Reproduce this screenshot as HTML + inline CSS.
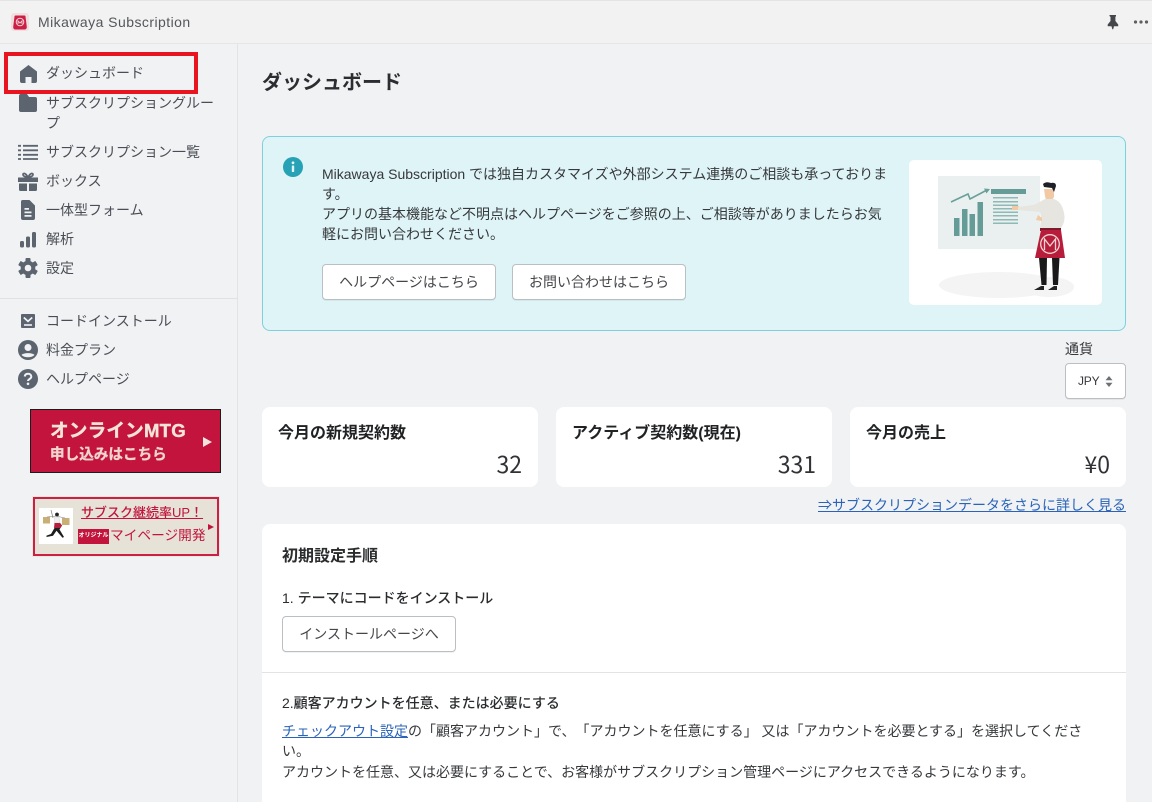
<!DOCTYPE html>
<html lang="ja"><head><meta charset="utf-8"><style>
*{box-sizing:border-box}
html,body{margin:0;padding:0;width:1152px;height:802px;overflow:hidden}
body{position:relative;background:#f1f2f4;color:#36383b;font-family:"Liberation Sans","Noto Sans CJK JP",sans-serif;font-size:14px;text-spacing-trim:space-all}
.a{position:absolute;white-space:nowrap}
.t{line-height:20px;font-weight:400}
.n{color:#4a4e54;left:46px}
.btn{position:absolute;background:#fff;border:1px solid #babfc3;border-radius:4px;box-shadow:0 1px 0 rgba(0,0,0,.05);text-align:center;font-weight:400;color:#44464a;line-height:34px;height:36px;white-space:nowrap}
.card{position:absolute;background:#fff;border-radius:8px;top:407px;height:80px;width:276px}
.card .h{position:absolute;left:16px;top:17px;font-weight:700;font-size:16px;line-height:20px;white-space:nowrap;color:#202223}
.card .v{position:absolute;right:16px;top:41px;font-size:23px;line-height:30px;color:#303236;font-family:"Noto Sans CJK JP","Liberation Sans",sans-serif;font-weight:400}
svg{position:absolute;display:block}
a{color:#2a63b8;text-decoration:underline}
</style></head><body>

<div class="a" style="left:0;top:0;width:1152px;height:44px;background:#f2f2f2;border-bottom:1px solid #e6e6e6;border-top:1px solid #e4e4e4"></div>
<svg style="left:11px;top:13px" width="18" height="18" viewBox="0 0 18 18"><rect width="18" height="18" rx="3" fill="#f0dfe0"/><path d="M3.500 3.500q0-1 1-1h9q1 0 1 1l1.300 10.500q0 2.500-2.300 2.500h-9q-2.300 0-2.300-2.500z" fill="#cc1f45"/><circle cx="9" cy="9" r="3.800" fill="none" stroke="#f7d5da" stroke-width="1"/><path d="M7 11V8l2 2 2-2v3" fill="none" stroke="#f7d5da" stroke-width=".9"/></svg>
<div class="a" style="left:38px;top:12px;line-height:20px;font-size:14px;color:#53565a;letter-spacing:.45px">Mikawaya Subscription</div>
<svg style="left:1106px;top:14px" width="14" height="16" viewBox="0 0 14 16"><path d="M3.500 1h6.500v1l-.6 1v4l2.800 3.500v1.700H8l-.8 3h-.9l-.8-3H1.700v-1.700L4.500 7V3L3.500 2z" fill="#44474a"/></svg>
<svg style="left:1133px;top:19px" width="16" height="6" viewBox="0 0 16 6"><circle cx="2.500" cy="3" r="1.600" fill="#5c5f62"/><circle cx="8" cy="3" r="1.600" fill="#5c5f62"/><circle cx="13.500" cy="3" r="1.600" fill="#5c5f62"/></svg>

<div class="a" style="left:237px;top:44px;width:1px;height:758px;background:#e1e3e5"></div>
<div class="a" style="left:0;top:298px;width:238px;height:1px;background:#dfe1e4"></div>

<div class="a" style="left:4px;top:52px;width:194px;height:42px;border:4px solid #e8141f"></div>

<svg style="left:18px;top:63px" width="20" height="20" viewBox="0 0 20 20"><path d="M10.500 2L19 8.500V18q0 2-2 2h-3.500v-6h-6v6H4q-2 0-2-2V8.500z" fill="#5c6470"/></svg>
<div class="a t n" style="top:63px">ダッシュボード</div>
<svg style="left:18px;top:93px" width="20" height="20" viewBox="0 0 20 20"><path d="M1 3q0-2 2-2h6l2 3h6q2 0 2 2v11q0 2-2 2H3q-2 0-2-2z" fill="#5c6470"/></svg>
<div class="a t n" style="top:93px">サブスクリプショングルー</div>
<div class="a t n" style="top:113px">プ</div>
<svg style="left:18px;top:143px" width="20" height="18" viewBox="0 0 20 18"><path d="M0 2.800h3M0 7.300h3M0 11.800h3M0 16h3M5 2.800h15M5 7.300h15M5 11.800h15M5 16h15" stroke="#5c6470" stroke-width="1.800" fill="none"/></svg>
<div class="a t n" style="top:142px">サブスクリプション一覧</div>
<svg style="left:18px;top:172px" width="20" height="20" viewBox="0 0 20 20"><path d="M0 5.500h20V10H0zM1 11.500h8V19H2.500Q1 19 1 17.500zM11 11.500h8v6q0 1.500-1.500 1.500H11z" fill="#5c6470"/><path d="M9.700 5C7 5 5 4 5 2.500S7.500.5 9.700 5zm.6 0C13 5 15 4 15 2.500S12.500.5 10.300 5z" fill="none" stroke="#5c6470" stroke-width="1.700"/></svg>
<div class="a t n" style="top:171px">ボックス</div>
<svg style="left:18px;top:200px" width="20" height="20" viewBox="0 0 20 20"><path fill-rule="evenodd" d="M4.500 0h7L17 5.500V18q0 2-2 2H5q-2 0-2-2V2q0-2 1.500-2zM6.500 8v1.800h4.500V8zM6.500 11.500v1.800h7v-1.800zM6.500 15v1.800h7V15z" fill="#5c6470"/></svg>
<div class="a t n" style="top:200px">一体型フォーム</div>
<svg style="left:18px;top:229px" width="20" height="20" viewBox="0 0 20 20"><rect x="2" y="12" width="4" height="6.500" rx="1.500" fill="#5c6470"/><rect x="8" y="7.500" width="4" height="11" rx="1.500" fill="#5c6470"/><rect x="14" y="3" width="4" height="15.500" rx="1.500" fill="#5c6470"/></svg>
<div class="a t n" style="top:229px">解析</div>
<svg style="left:18px;top:258px" width="20" height="20" viewBox="0 0 20 20"><g fill="#5c6470"><circle cx="10" cy="10" r="7.300"/><rect x="7.500" y="0" width="5" height="20" rx="1"/><rect x="7.500" y="0" width="5" height="20" rx="1" transform="rotate(60 10 10)"/><rect x="7.500" y="0" width="5" height="20" rx="1" transform="rotate(120 10 10)"/></g><circle cx="10" cy="10" r="3.300" fill="#f1f2f4"/></svg>
<div class="a t n" style="top:258px">設定</div>

<svg style="left:18px;top:311px" width="20" height="20" viewBox="0 0 20 20"><rect x="3" y="3" width="14" height="14" rx="1" fill="#5c6470"/><path d="M5.800 6.500L10 10.300l4.200-3.800" fill="none" stroke="#f1f2f4" stroke-width="1.700"/><path d="M6 14h8" stroke="#f1f2f4" stroke-width="1.600"/></svg>
<div class="a t n" style="top:311px">コードインストール</div>
<svg style="left:18px;top:340px" width="20" height="20" viewBox="0 0 20 20"><circle cx="10" cy="10" r="10" fill="#5c6470"/><circle cx="10" cy="7.500" r="3.500" fill="#f1f2f4"/><path d="M3.500 15c2-2.500 11-2.500 13 0-3 3-10 3-13 0z" fill="#f1f2f4"/></svg>
<div class="a t n" style="top:340px">料金プラン</div>
<svg style="left:18px;top:369px" width="20" height="20" viewBox="0 0 20 20"><circle cx="10" cy="10" r="10" fill="#5c6470"/><path d="M6.800 7.500C7 5.500 8.500 4.800 10 4.800c2 0 3.300 1.200 3.300 2.800 0 2.400-3.300 2.400-3.300 4.400" fill="none" stroke="#f1f2f4" stroke-width="2"/><circle cx="10" cy="14.800" r="1.300" fill="#f1f2f4"/></svg>
<div class="a t n" style="top:369px">ヘルプページ</div>

<div class="a" style="left:30px;top:409px;width:191px;height:64px;background:#c2143c;border:1px solid #1c1c1c"></div>
<div class="a" style="left:50px;top:419px;font-size:18.600px;line-height:24px;font-weight:700;color:#f4e3d8;-webkit-text-stroke:.4px #f4e3d8;letter-spacing:.2px">オンラインMTG</div>
<div class="a" style="left:50px;top:445px;font-size:14.600px;line-height:20px;font-weight:700;color:#f0d5cf;-webkit-text-stroke:.3px #f0d5cf">申し込みはこちら</div>
<svg style="left:203px;top:437px" width="9" height="10" viewBox="0 0 9 10"><path d="M0 0l9 5-9 5z" fill="#f1e5dd"/></svg>

<div class="a" style="left:32px;top:496px;width:188px;height:61px;background:#ece8e0"></div>
<div class="a" style="left:33px;top:497px;width:186px;height:59px;border:2px solid #cc1f45;background:#e6e2d8"></div>
<div class="a" style="left:39px;top:508px;width:34px;height:36px;background:#fff"></div>
<svg style="left:39px;top:508px" width="34" height="36" viewBox="0 0 34 36"><rect x="4" y="9" width="7" height="6.500" fill="#c9ae76"/><rect x="23" y="10" width="7.500" height="7" fill="#c9ae76"/><path d="M8 9l9-1 9 2" stroke="#777" stroke-width=".5" fill="none"/><path d="M12 2l2 8" stroke="#888" stroke-width=".8"/><circle cx="18" cy="6.500" r="1.900" fill="#222"/><path d="M15.500 9h4.500l.7 6h-5z" fill="#eee" stroke="#bbb" stroke-width=".3"/><path d="M15.500 15h5.500l2 2.500-2.500 4 4.500 7.500-1.500.7-6-7-3.500 5-6.500 1.300v-1.400l4.500-1.600 3.500-6z" fill="#1d1d1d"/><path d="M15.500 15h5.500l2 2.500-1.500 2.500h-6.500z" fill="#b3203f"/></svg>
<div class="a" style="left:81px;top:504px;font-size:13px;line-height:18px;font-weight:500;color:#c2143c;text-decoration:underline">サブスク継続率UP！</div>
<div class="a" style="left:78px;top:529px;width:31px;height:15px;background:#c2143c;color:#fff;font-size:6px;line-height:15px;text-align:center;font-weight:700">オリジナル</div>
<div class="a" style="left:110px;top:526px;font-size:13.700px;line-height:20px;color:#c2143c;font-weight:400">マイページ開発</div>
<svg style="left:208px;top:524px" width="6" height="6" viewBox="0 0 6 6"><path d="M0 0l6 3-6 3z" fill="#c2143c"/></svg>

<div class="a" style="left:262px;top:69px;font-size:20px;line-height:28px;font-weight:700;color:#2b2d30">ダッシュボード</div>

<div class="a" style="left:262px;top:136px;width:864px;height:195px;background:#dff4f7;border:1px solid #7fd0de;border-radius:8px"></div>
<svg style="left:283px;top:157px" width="20" height="20" viewBox="0 0 20 20"><circle cx="10" cy="10" r="10" fill="#27a1b5"/><circle cx="10" cy="5.800" r="1.400" fill="#dff4f7"/><rect x="8.800" y="8.500" width="2.400" height="6.500" rx=".6" fill="#dff4f7"/></svg>
<div class="a t" style="left:322px;top:164px">Mikawaya Subscription では独自カスタマイズや外部システム連携のご相談も承っておりま</div>
<div class="a t" style="left:322px;top:184px">す。</div>
<div class="a t" style="left:322px;top:204px">アプリの基本機能など不明点はヘルプページをご参照の上、ご相談等がありましたらお気</div>
<div class="a t" style="left:322px;top:224px">軽にお問い合わせください。</div>
<div class="btn" style="left:322px;top:264px;width:174px">ヘルプページはこちら</div>
<div class="btn" style="left:512px;top:264px;width:174px">お問い合わせはこちら</div>

<div class="a" style="left:909px;top:160px;width:193px;height:145px;background:#fff;border-radius:5px"></div>
<svg style="left:909px;top:160px" width="193" height="145" viewBox="0 0 193 145">
<ellipse cx="90" cy="125" rx="60" ry="13" fill="#f3f4f3"/>
<ellipse cx="140" cy="127" rx="25" ry="10" fill="#f3f4f3"/>
<rect x="29" y="16" width="102" height="73" fill="#e9f0ef"/>
<path d="M42 42l17-8 2 5 17-9" fill="none" stroke="#6a9f9a" stroke-width="1.600"/>
<path d="M81 29l-6-.5 2.500 5z" fill="#6a9f9a"/>
<g fill="#669c97"><rect x="45" y="58" width="5.500" height="18"/><rect x="53" y="49" width="5.500" height="27"/><rect x="60.500" y="54" width="5.500" height="22"/><rect x="68.500" y="42" width="5.500" height="34"/><rect x="82" y="29" width="35" height="5"/></g>
<g fill="#8fb9b5"><rect x="84" y="37" width="25" height="1.500"/><rect x="84" y="41" width="25" height="1.500"/><rect x="84" y="44.500" width="25" height="1.500"/><rect x="84" y="48" width="25" height="1.500"/><rect x="84" y="51.500" width="25" height="1.500"/><rect x="84" y="55" width="25" height="1.500"/><rect x="84" y="59" width="25" height="1.500"/><rect x="84" y="62.500" width="25" height="1.500"/></g>
<path d="M103 46h7v4h-7z" fill="#f1c9a5"/>
<path d="M135 29h10v8l-2 3h-6l-1-4z" fill="#f1c9a5"/>
<path d="M134 24q3-3 8-1 5-1 5 3l-2 6-2-4-8-1z" fill="#1f1f28"/>
<path d="M109 47l16-2 11-6h9q8 3 10 14 2 8-3 15h-21l1-10-1-6-22-2z" fill="#e6e5e0"/>
<path d="M129 55l4 3v3l-6-1z" fill="#f1c9a5"/>
<rect x="131" y="68" width="21" height="3" fill="#7a1a2c"/>
<path d="M132 70h20l4 28h-30z" fill="#b71d3b"/>
<circle cx="141" cy="84" r="9.300" fill="none" stroke="#f1d5d5" stroke-width="1.300"/>
<path d="M135.500 90v-11l5.500 7 5.500-7v11" fill="none" stroke="#f1d5d5" stroke-width="1.300"/>
<path d="M130 98h8l-.5 27h-5zM143 98h7.500l-1.500 27h-5z" fill="#191919"/>
<path d="M125 130l7-4h3v4zM139 130l6-4h3v4z" fill="#222"/>
</svg>

<div class="a" style="left:1065px;top:340px;line-height:18px;font-size:14px;font-weight:400">通貨</div>
<div class="a" style="left:1065px;top:363px;width:61px;height:36px;background:#fff;border:1px solid #babfc3;border-radius:4px;box-shadow:0 1px 0 rgba(0,0,0,.05)"></div>
<div class="a" style="left:1078px;top:372px;line-height:18px;font-size:12px;letter-spacing:-.2px">JPY</div>
<svg style="left:1105px;top:376px" width="8" height="11" viewBox="0 0 8 11"><path d="M4 0l3.500 4.300h-7zM4 11L.5 6.700h7z" fill="#6d7175"/></svg>

<div class="card" style="left:262px"><div class="h">今月の新規契約数</div><div class="v">32</div></div>
<div class="card" style="left:556px"><div class="h">アクティブ契約数(現在)</div><div class="v">331</div></div>
<div class="card" style="left:850px"><div class="h">今月の売上</div><div class="v">¥0</div></div>

<div class="a t" style="right:26px;top:495px"><a>⇒サブスクリプションデータをさらに詳しく見る</a></div>

<div class="a" style="left:262px;top:524px;width:864px;height:278px;background:#fff;border-radius:8px 8px 0 0"></div>
<div class="a" style="left:282px;top:546px;font-size:16px;line-height:22px;font-weight:700;color:#2a2c2e">初期設定手順</div>
<div class="a" style="left:282px;top:588px;line-height:20px;font-weight:500;color:#2a2c2e">1. テーマにコードをインストール</div>
<div class="btn" style="left:282px;top:616px;width:174px">インストールページへ</div>
<div class="a" style="left:262px;top:672px;width:864px;height:1px;background:#e1e3e5"></div>
<div class="a" style="left:282px;top:693px;line-height:20px;font-weight:500;color:#2a2c2e">2.顧客アカウントを任意、または必要にする</div>
<div class="a t" style="left:282px;top:721px"><a>チェックアウト設定</a>の「顧客アカウント」で、「アカウントを任意にする」 又は「アカウントを必要とする」を選択してくださ</div>
<div class="a t" style="left:282px;top:741px">い。</div>
<div class="a t" style="left:282px;top:762px">アカウントを任意、又は必要にすることで、お客様がサブスクリプション管理ページにアクセスできるようになります。</div>
</body></html>
